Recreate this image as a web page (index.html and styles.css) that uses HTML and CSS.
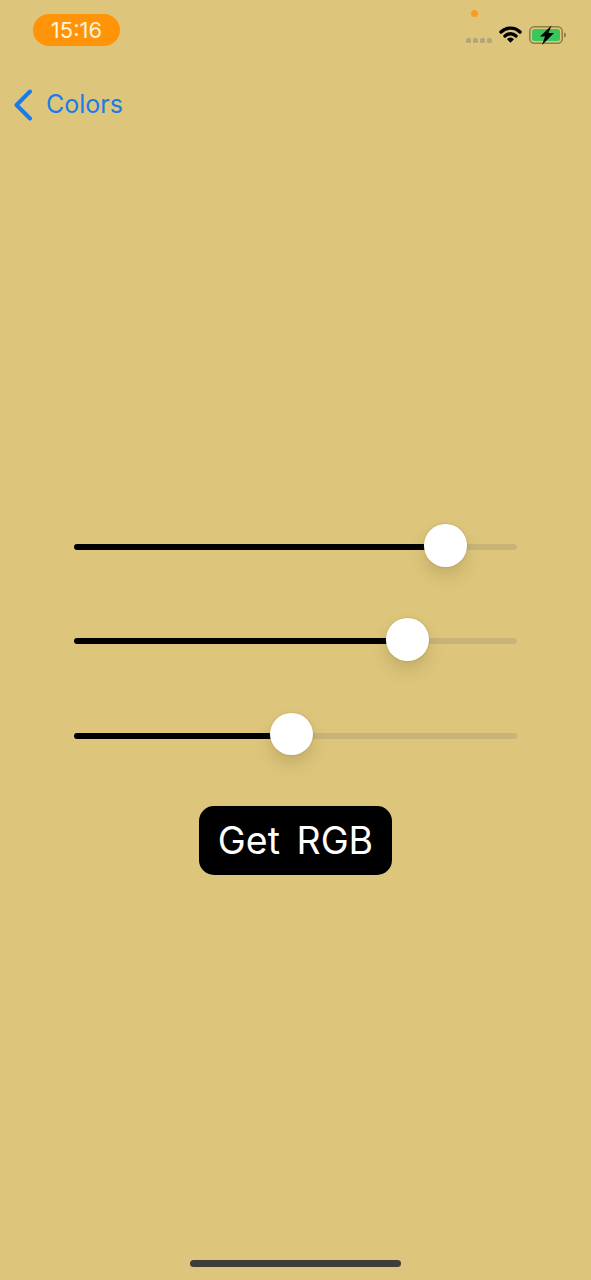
FILE: index.html
```html
<!DOCTYPE html>
<html lang="en">
<head>
<meta charset="utf-8">
<title>Colors</title>
<link rel="stylesheet" href="styles.css">
</head>
<body>
<div class="screen">
  <header class="status">
    <div class="time">15:16</div>
    <div class="status-right">
      <span class="privacy-dot"></span>
      <div class="signal"><i></i><i></i><i></i><i></i></div>
      <svg class="wifi" width="23" height="17" viewBox="0 0 23 17">
        <path d="M2 6a13.600 13.600 0 0 1 19 0" fill="none" stroke="#000" stroke-width="3.400" stroke-linecap="round"/>
        <path d="M6 10a8 8 0 0 1 11 0" fill="none" stroke="#000" stroke-width="3.400" stroke-linecap="round"/>
        <path d="M8 13.200a4.600 4.600 0 0 1 7 0L11.500 16.800z" fill="#000"/>
      </svg>
      <svg class="battery" width="38" height="20" viewBox="0 0 38 20">
        <rect x="0.75" y="1.75" width="32.5" height="16.5" rx="4.5" fill="none" stroke="#8f7f45" stroke-width="1.5"/>
        <rect x="3" y="4" width="28" height="12" rx="2.5" fill="#3bc65c"/>
        <path d="M35 7.500c1.500.4 2 1.400 2 2.500s-.5 2.100-2 2.500z" fill="#8f7f45"/>
        <path d="M22.500 0.500 11 11.500h5l-3 8.500 12-12h-5.500z" fill="#000"/>
      </svg>
    </div>
  </header>

  <nav class="nav">
    <svg class="chevron" width="20" height="32" viewBox="0 0 20 32">
      <path d="M17 2.500 3.500 16 17 29.500" fill="none" stroke="#1a7ce8" stroke-width="4" stroke-linecap="round" stroke-linejoin="round"/>
    </svg>
    <span class="back-label">Colors</span>
  </nav>

  <main class="controls">
    <div class="slider"><div class="track-fill" style="width:371px"></div><div class="track-rest"></div><span class="thumb" style="left:350px"></span></div>
    <div class="slider"><div class="track-fill" style="width:333px"></div><div class="track-rest"></div><span class="thumb" style="left:312px"></span></div>
    <div class="slider"><div class="track-fill" style="width:217px"></div><div class="track-rest"></div><span class="thumb" style="left:196px"></span></div>
    <button class="rgb-button">Get RGB</button>
  </main>

  <div class="home-indicator"></div>
</div>
</body>
</html>
```
FILE: styles.css
```css
* { box-sizing: border-box; }
html, body { margin: 0; padding: 0; }
body { background: #ddc67c; font-family: Inter, "Liberation Sans", sans-serif; }

.screen {
  width: 591px;
  height: 1280px;
  display: flex;
  flex-direction: column;
  overflow: hidden;
  background: #ddc67c;
}

.status {
  height: 46px;
  margin-top: 14px;
  padding: 0 24px 0 33px;
  display: flex;
  justify-content: space-between;
  align-items: flex-start;
}

.time {
  width: 87px;
  height: 32px;
  border-radius: 16px;
  background: #ff9408;
  color: #fff3dc;
  font-size: 22px;
  line-height: 33px;
  text-align: center;
}

.status-right {
  position: relative;
  display: flex;
  align-items: center;
  height: 20px;
  margin-top: 11px;
}

.privacy-dot {
  position: absolute;
  left: 5px;
  top: -15px;
  width: 7px;
  height: 7px;
  border-radius: 50%;
  background: #ff9a1f;
}

.signal { display: flex; gap: 2px; margin-top: 10px; margin-right: 7px; }
.signal i { display: block; width: 5px; height: 5px; border-radius: 1.500px; background: #b3a57a; }
.wifi { margin-right: 7px; margin-top: -2px; }
.battery { display: block; }

.nav {
  height: 60px;
  padding: 29px 0 0 13px;
  display: flex;
  align-items: flex-start;
}
.chevron { display: block; margin-right: 13px; }
.back-label {
  color: #1a7ce8;
  font-size: 25px;
  line-height: 30px;
}

.controls {
  padding: 424px 74px 0;
  display: flex;
  flex-direction: column;
}

.slider {
  position: relative;
  height: 6px;
  margin-bottom: 88.400px;
  display: flex;
  width: 443px;
}
.track-fill { height: 6px; background: #000; border-radius: 3px 0 0 3px; }
.track-rest { flex: 1; height: 6px; background: #c9b478; border-radius: 0 3px 3px 0; }

.thumb {
  position: absolute;
  top: -20px;
  width: 42.500px;
  height: 42.500px;
  border-radius: 50%;
  background: #fff;
  box-shadow: 0 9px 16px rgba(110, 90, 30, 0.22), 0 0 2px rgba(110, 90, 30, 0.35);
}

.rgb-button {
  align-self: flex-start;
  margin: -20.800px 0 0 125px;
  width: 193px;
  height: 69px;
  border: 0;
  padding: 0;
  border-radius: 15px;
  background: #000;
  color: #fff;
  font-family: inherit;
  font-size: 37.500px;
  word-spacing: 6px;
}

.home-indicator {
  width: 211px;
  height: 7px;
  margin: auto auto 13px 190px;
  border-radius: 4px;
  background: #403d38;
}
```
